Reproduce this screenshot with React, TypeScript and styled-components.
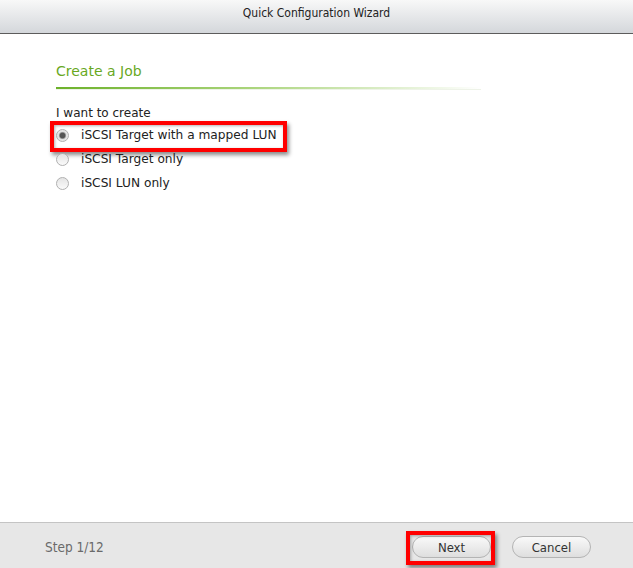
import styled, { createGlobalStyle } from 'styled-components';
import { useState } from 'react';

const options = [
    "iSCSI Target with a mapped LUN",
    "iSCSI Target only",
    "iSCSI LUN only",
]

const App = () => {
    const [picked, setPicked] = useState<number>(0)

    return <Main>
        <Global />
        <TitleBar>Quick Configuration Wizard</TitleBar>

        <Content>
            <Heading>Create a Job</Heading>
            <Rule />
            <Lead>I want to create</Lead>
            <List>
                {options.map((o, i) => (
                    <Option key={o} onClick={() => setPicked(i)}>
                        <Radio on={picked === i} />
                        {o}
                        {i === 0 && <Mark top={-2} left={-6} w={237} h={31} />}
                    </Option>
                ))}
            </List>
        </Content>

        <Footer>
            <Step>Step 1/12</Step>
            <ButtonHolder>
                <Marked>
                    <Button>Next</Button>
                    <Mark top={-5} left={-6} w={89} h={34} />
                </Marked>
                <Button>Cancel</Button>
            </ButtonHolder>
        </Footer>
    </Main>;
}

export default App;

const Global = createGlobalStyle`
    body{
        margin: 0;
        background-color: white;
    }
`

const Main = styled.div`
    width: 633px;
    height: 568px;
    display: flex;
    flex-direction: column;
    background-color: white;
    font-family: "DejaVu Sans", Verdana, sans-serif;
    color: #222;
`

const TitleBar = styled.div`
    height: 34px;
    border-bottom: 1px solid #5c5c5c;
    background: linear-gradient(#f8f8f8, #d4d7db);
    display: flex;
    justify-content: center;
    padding-top: 6px;
    box-sizing: border-box;
    font-family: "DejaVu Sans Condensed", Tahoma, sans-serif;
    font-size: 12px;
    color: #222;
`

const Content = styled.div`
    flex: 1;
    padding: 27px 0 0 56px;
`

const Heading = styled.div`
    font-size: 14px;
    line-height: 20px;
    color: #69a81f;
`

const Rule = styled.div`
    width: 425px;
    height: 2px;
    margin-top: 6px;
    background: linear-gradient(to right, #6cb12a, #a9d47a 45%, rgba(255,255,255,0));
    border-bottom: 1px solid #eef3e8;
`

const Lead = styled.div`
    font-size: 12px;
    line-height: 16px;
    margin-top: 15px;
`

const List = styled.div`
    display: flex;
    flex-direction: column;
    margin-top: 2px;
`

const Option = styled.div`
    position: relative;
    height: 24px;
    display: flex;
    align-items: center;
    gap: 12px;
    font-size: 12.2px;
    cursor: pointer;
`

const Radio = styled.div<{on: boolean}>`
    width: 11px;
    height: 11px;
    border-radius: 50%;
    border: 1px solid #b0b0b0;
    background: ${({on}) => on
        ? "radial-gradient(circle, #555 0 2.5px, #8a8a8a 3px, #e0e0e0 4px, #f4f4f4)"
        : "linear-gradient(#e4e4e4, #fafafa)"};
`

const Mark = styled.div<{top: number, left: number, w: number, h: number}>`
    position: absolute;
    top: ${({top}) => top}px;
    left: ${({left}) => left}px;
    width: ${({w}) => w}px;
    height: ${({h}) => h}px;
    box-sizing: border-box;
    border: 4px solid #ff0000;
    box-shadow: 2px 3px 4px rgba(0,0,0,0.45), inset 1px 1px 3px rgba(0,0,0,0.3);
    pointer-events: none;
`

const Footer = styled.div`
    height: 46px;
    border-top: 1px solid #c4c4c4;
    background-color: #e7e7e7;
    display: flex;
    align-items: center;
    justify-content: space-between;
    padding: 3px 42px 0 45px;
    box-sizing: border-box;
`

const Step = styled.div`
    font-family: "DejaVu Sans Condensed", Tahoma, sans-serif;
    font-size: 13.5px;
    color: #6a6a6a;
`

const ButtonHolder = styled.div`
    display: flex;
    align-items: center;
    gap: 21px;
`

const Marked = styled.div`
    position: relative;
    display: flex;
`

const Button = styled.div`
    width: 79px;
    height: 22px;
    box-sizing: border-box;
    border: 1px solid #b4b4b4;
    border-radius: 11px;
    background: linear-gradient(#f9f9f9, #dedede);
    display: flex;
    align-items: center;
    justify-content: center;
    font-family: "DejaVu Sans Condensed", Tahoma, sans-serif;
    font-size: 13px;
    color: #333;
    cursor: pointer;
`
